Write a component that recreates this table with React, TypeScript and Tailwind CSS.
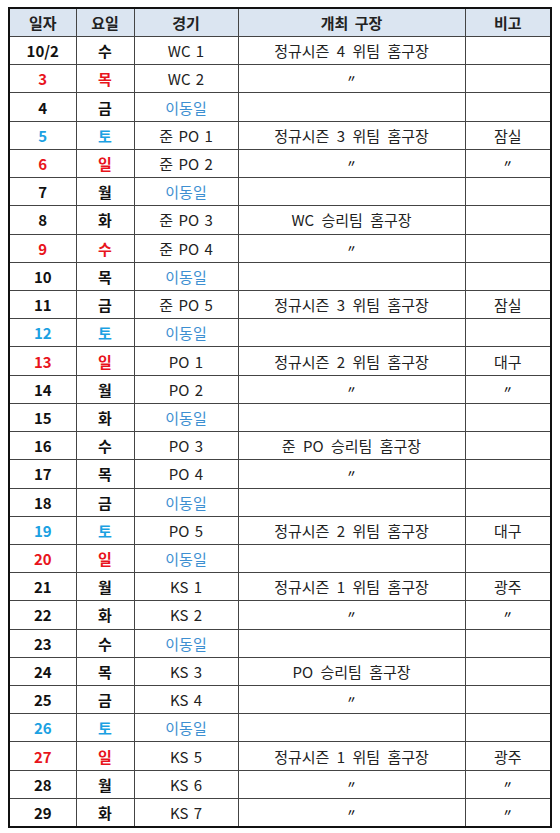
const RED = "text-[#e8141c]";
const SAT = "text-[#1ba1e2]";
const MOVE = "text-[#3d8fd1]";

type Row = {
  date: string;
  day: string;
  tone?: "red" | "sat";
  game: string;
  venue?: string;
  note?: string;
};

const rows: Row[] = [
  { date: "10/2", day: "수", game: "WC 1", venue: "정규시즌 4 위팀 홈구장" },
  { date: "3", day: "목", tone: "red", game: "WC 2", venue: "〃" },
  { date: "4", day: "금", game: "이동일" },
  { date: "5", day: "토", tone: "sat", game: "준 PO 1", venue: "정규시즌 3 위팀 홈구장", note: "잠실" },
  { date: "6", day: "일", tone: "red", game: "준 PO 2", venue: "〃", note: "〃" },
  { date: "7", day: "월", game: "이동일" },
  { date: "8", day: "화", game: "준 PO 3", venue: "WC 승리팀 홈구장" },
  { date: "9", day: "수", tone: "red", game: "준 PO 4", venue: "〃" },
  { date: "10", day: "목", game: "이동일" },
  { date: "11", day: "금", game: "준 PO 5", venue: "정규시즌 3 위팀 홈구장", note: "잠실" },
  { date: "12", day: "토", tone: "sat", game: "이동일" },
  { date: "13", day: "일", tone: "red", game: "PO 1", venue: "정규시즌 2 위팀 홈구장", note: "대구" },
  { date: "14", day: "월", game: "PO 2", venue: "〃", note: "〃" },
  { date: "15", day: "화", game: "이동일" },
  { date: "16", day: "수", game: "PO 3", venue: "준 PO 승리팀 홈구장" },
  { date: "17", day: "목", game: "PO 4", venue: "〃" },
  { date: "18", day: "금", game: "이동일" },
  { date: "19", day: "토", tone: "sat", game: "PO 5", venue: "정규시즌 2 위팀 홈구장", note: "대구" },
  { date: "20", day: "일", tone: "red", game: "이동일" },
  { date: "21", day: "월", game: "KS 1", venue: "정규시즌 1 위팀 홈구장", note: "광주" },
  { date: "22", day: "화", game: "KS 2", venue: "〃", note: "〃" },
  { date: "23", day: "수", game: "이동일" },
  { date: "24", day: "목", game: "KS 3", venue: "PO 승리팀 홈구장" },
  { date: "25", day: "금", game: "KS 4", venue: "〃" },
  { date: "26", day: "토", tone: "sat", game: "이동일" },
  { date: "27", day: "일", tone: "red", game: "KS 5", venue: "정규시즌 1 위팀 홈구장", note: "광주" },
  { date: "28", day: "월", game: "KS 6", venue: "〃", note: "〃" },
  { date: "29", day: "화", game: "KS 7", venue: "〃", note: "〃" },
];

function Cell({ text }: { text?: string }) {
  if (!text) return null;
  if (text === "〃") {
    return <span className="relative -top-[3px] text-[10px] font-bold text-[#111]">〃</span>;
  }
  return <span className="[word-spacing:4px]">{text}</span>;
}

export default function App() {
  const cell = "border border-[#444] text-center align-middle p-0";
  return (
    <div
      className="min-h-[833px] bg-white pl-[8px] pt-[7px]"
      style={{ fontFamily: '"Noto Sans CJK KR", "Noto Sans", sans-serif' }}
    >
      <table className="w-[542px] table-fixed border-collapse border-2 border-[#111] text-[15px] leading-none text-[#222]">
        <colgroup>
          <col className="w-[67px]" />
          <col className="w-[58px]" />
          <col className="w-[104px]" />
          <col className="w-[227px]" />
          <col className="w-[86px]" />
        </colgroup>
        <thead>
          <tr className="h-[28.5px] bg-[#dbe5f1] font-bold">
            <th className={cell}>일자</th>
            <th className={cell}>요일</th>
            <th className={cell}>경기</th>
            <th className={`${cell} [word-spacing:3px]`}>개최 구장</th>
            <th className={cell}>비고</th>
          </tr>
        </thead>
        <tbody>
          {rows.map((r) => {
            const tone = r.tone === "red" ? RED : r.tone === "sat" ? SAT : "text-[#111]";
            return (
              <tr key={r.date} className="h-[28.23px]">
                <td className={`${cell} ${tone} font-bold text-[15px]`}>{r.date}</td>
                <td className={`${cell} ${tone} font-bold`}>{r.day}</td>
                <td className={`${cell} ${r.game === "이동일" ? MOVE : ""}`}>
                  <span className="[word-spacing:2px]">{r.game}</span>
                </td>
                <td className={cell}>
                  <Cell text={r.venue} />
                </td>
                <td className={cell}>
                  <Cell text={r.note} />
                </td>
              </tr>
            );
          })}
        </tbody>
      </table>
    </div>
  );
}
